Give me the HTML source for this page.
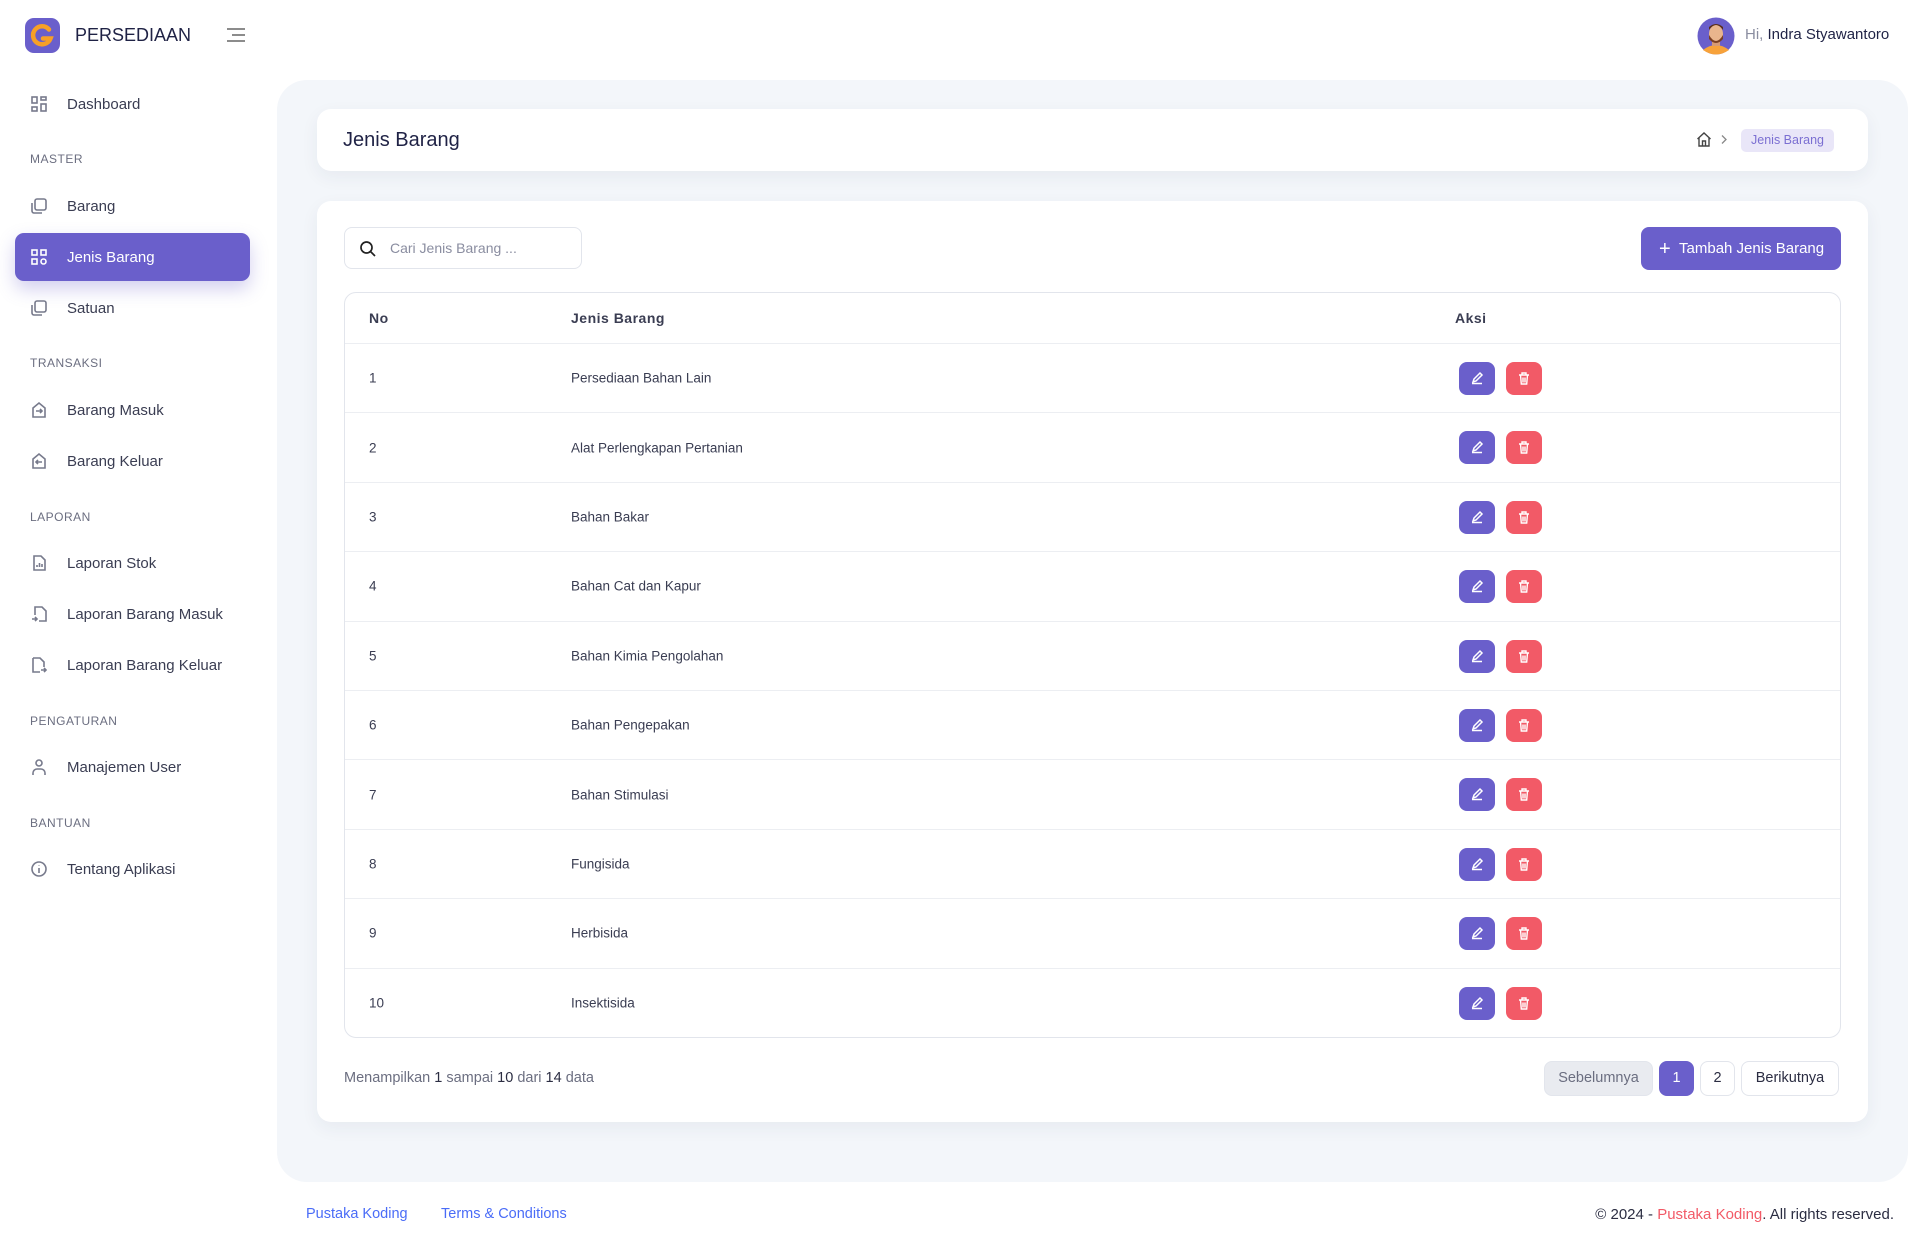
<!DOCTYPE html>
<html><head><meta charset="utf-8"><style>
*{box-sizing:border-box;margin:0;padding:0}
body{width:1920px;height:1250px;background:#fff;font-family:"Liberation Sans",sans-serif;color:#2b2d42;position:relative;overflow:hidden}
.a{position:absolute}
.logo{left:25px;top:18px;width:35px;height:35px;border-radius:9px;background:#6a5fcb}
.brand{left:75px;top:25px;font-size:18px;color:#1f2245}
.mi{position:absolute;left:15px;width:235px;height:48px;display:flex;align-items:center;font-size:15px;color:#3a3d52}
.mi svg{margin-left:15px;margin-right:19px;width:18px;height:18px;stroke:#777a8c;fill:none;stroke-width:1.6}
.mi.act{background:#6a5fcb;color:#fff;border-radius:9px;box-shadow:0 8px 18px rgba(106,95,203,.3)}
.mi.act svg{stroke:#fff}
.sec{position:absolute;left:30px;font-size:12px;color:#6b6e80;letter-spacing:.5px}
.main{left:277px;top:80px;width:1631px;height:1102px;background:#f3f6fa;border-radius:30px}
.card{background:#fff;border-radius:14px;box-shadow:0 6px 18px rgba(40,50,90,.06)}
.row{position:absolute;left:0;width:1496px;height:69.4px;border-top:1px solid #eceef2;font-size:13.5px;color:#3a3d52}
.row span{position:absolute;top:50%;transform:translateY(-50%)}
.be,.bd{position:absolute;top:18px;width:36px;height:33px;border-radius:8px}
.be{left:1114px;background:#6a5fcb}.bd{left:1161px;background:#f25a67}
.pg{position:absolute;top:1061px;height:35px;border:1px solid #e2e5ec;border-radius:8px;font-size:14.5px;text-align:center;line-height:33px;color:#2b2d42;background:#fff}
</style></head><body>
<div class="a logo"><svg width="35" height="35" viewBox="0 0 35 35"><path d="M24 11.5a9 9 0 1 0 1.5 9H18" fill="none" stroke="#f7a027" stroke-width="4.5" stroke-linecap="round"/></svg></div>
<div class="a brand">PERSEDIAAN</div>
<svg class="a" style="left:225px;top:27px" width="22" height="16"><path d="M2 2H20M7 8H20M2 14H20" stroke="#666" stroke-width="1.6"/></svg>

<div class="mi" style="top:80px"><svg viewBox="0 0 18 18"><rect x="2" y="2" width="5" height="6"/><rect x="11" y="2" width="5" height="3"/><rect x="2" y="12" width="5" height="4"/><rect x="11" y="9" width="5" height="7"/></svg>Dashboard</div>
<div class="sec" style="top:152px">MASTER</div>
<div class="mi" style="top:182px"><svg viewBox="0 0 18 18"><rect x="5" y="2" width="11" height="11" rx="2"/><path d="M2 6v8a2 2 0 0 0 2 2h8"/></svg>Barang</div>
<div class="mi act" style="top:233px"><svg viewBox="0 0 18 18"><rect x="2" y="2" width="5" height="5"/><rect x="11" y="2" width="5" height="5"/><rect x="2" y="11" width="5" height="5"/><circle cx="13.5" cy="13.5" r="2.5"/></svg>Jenis Barang</div>
<div class="mi" style="top:284px"><svg viewBox="0 0 18 18"><rect x="5" y="2" width="11" height="11" rx="2"/><path d="M2 6v8a2 2 0 0 0 2 2h8"/></svg>Satuan</div>
<div class="sec" style="top:356px">TRANSAKSI</div>
<div class="mi" style="top:386px"><svg viewBox="0 0 18 18"><path d="M3 7l6-5 6 5v9H3z M6 10h6M10 8l2 2-2 2"/></svg>Barang Masuk</div>
<div class="mi" style="top:437px"><svg viewBox="0 0 18 18"><path d="M3 7l6-5 6 5v9H3z M12 10H6M8 8l-2 2 2 2"/></svg>Barang Keluar</div>
<div class="sec" style="top:510px">LAPORAN</div>
<div class="mi" style="top:539px"><svg viewBox="0 0 18 18"><path d="M4 2h7l4 4v10H4z M7 13v-2M9.5 13v-4M12 13v-3"/></svg>Laporan Stok</div>
<div class="mi" style="top:590px"><svg viewBox="0 0 18 18"><path d="M5 10V2h7l4 4v10H9 M2 14h5M5 12l2 2-2 2"/></svg>Laporan Barang Masuk</div>
<div class="mi" style="top:641px"><svg viewBox="0 0 18 18"><path d="M3 2h7l4 4v5 M3 2v14h7 M11 14h5M14 12l2 2-2 2"/></svg>Laporan Barang Keluar</div>
<div class="sec" style="top:714px">PENGATURAN</div>
<div class="mi" style="top:743px"><svg viewBox="0 0 18 18"><circle cx="9" cy="5" r="3"/><path d="M3 17v-2a4 4 0 0 1 4-4h4a4 4 0 0 1 4 4v2"/></svg>Manajemen User</div>
<div class="sec" style="top:816px">BANTUAN</div>
<div class="mi" style="top:845px"><svg viewBox="0 0 18 18"><circle cx="9" cy="9" r="7"/><path d="M9 8v5M9 5.5v.5"/></svg>Tentang Aplikasi</div>

<svg class="a" style="left:1697px;top:15px" width="38" height="40" viewBox="0 0 38 40"><circle cx="19" cy="21" r="18.5" fill="#6a5fcb"/><path d="M6 35q13-10 26 0q-13 9-26 0z" fill="#f7a23a"/><rect x="15" y="26" width="8" height="5" fill="#d79b74"/><ellipse cx="19" cy="19" rx="7" ry="9" fill="#e9b58d"/><path d="M12 20q7 12 14 0v4q-7 8-14 0z" fill="#7a3f22"/><path d="M12 15q7-10 14 0v-3q-7-6-14 0z" fill="#5a2e18"/></svg>
<div class="a" style="left:1745px;top:26px;font-size:15px;color:#1f2245"><span style="color:#8a8da0">Hi,</span> Indra Styawantoro</div>

<div class="a main"></div>
<div class="a card" style="left:317px;top:109px;width:1551px;height:62px">
<div class="a" style="left:26px;top:20px;font-size:20px;color:#1f2245">Jenis Barang</div>
<svg class="a" style="left:1379px;top:22px" width="16" height="17" viewBox="0 0 16 17"><path d="M1.5 8L8 2l6.5 6M3 7v8h10V7M6.5 15v-5h3v5" fill="none" stroke="#444" stroke-width="1.4"/></svg>
<svg class="a" style="left:1403px;top:25px" width="8" height="11" viewBox="0 0 8 11"><path d="M2 1.5l4 4-4 4" fill="none" stroke="#888" stroke-width="1.3"/></svg>
<div class="a" style="left:1424px;top:20px;width:93px;height:23px;background:#e9e6f8;border-radius:5px;font-size:12.5px;color:#7b6fd2;text-align:center;line-height:23px">Jenis Barang</div>
</div>

<div class="a card" style="left:317px;top:201px;width:1551px;height:921px"></div>
<div class="a" style="left:344px;top:227px;width:238px;height:42px;border:1px solid #e2e5ec;border-radius:8px">
<svg class="a" style="left:14px;top:12px" width="18" height="18" viewBox="0 0 18 18"><circle cx="7.5" cy="7.5" r="5.5" fill="none" stroke="#222" stroke-width="1.7"/><path d="M11.5 11.5l4.5 4.5" stroke="#222" stroke-width="1.7"/></svg>
<div class="a" style="left:45px;top:12px;font-size:14px;color:#8a8da0">Cari Jenis Barang ...</div></div>
<div class="a" style="left:1641px;top:227px;width:200px;height:43px;background:#6a5fcb;border-radius:8px;color:#fff;font-size:15px;line-height:43px;padding-left:18px"><span style="font-size:20px;vertical-align:-2px">+</span>&nbsp;&nbsp;Tambah Jenis Barang</div>

<div class="a" style="left:344px;top:292px;width:1497px;height:746px;border:1px solid #e2e5ec;border-radius:12px;overflow:hidden">
<div class="a" style="left:24px;top:17px;font-size:14px;font-weight:bold;color:#3a3d52;letter-spacing:.5px">No</div>
<div class="a" style="left:226px;top:17px;font-size:14px;font-weight:bold;color:#3a3d52;letter-spacing:.5px">Jenis Barang</div>
<div class="a" style="left:1110px;top:17px;font-size:14px;font-weight:bold;color:#3a3d52;letter-spacing:.5px">Aksi</div>
<div id="rows"></div>
</div>
<script>
var n=["Persediaan Bahan Lain","Alat Perlengkapan Pertanian","Bahan Bakar","Bahan Cat dan Kapur","Bahan Kimia Pengolahan","Bahan Pengepakan","Bahan Stimulasi","Fungisida","Herbisida","Insektisida"],h="";
var ed='<svg style="position:absolute;left:11px;top:9px" width="14" height="14" viewBox="0 0 14 14"><path d="M3 11l1-3 6-6 2 2-6 6z M2 12.5h10" fill="none" stroke="#fff" stroke-width="1.5"/></svg>';
var tr='<svg style="position:absolute;left:11px;top:9px" width="14" height="15" viewBox="0 0 14 15"><path d="M2 4h10M5 4V2h4v2M3.5 4l.8 9h5.4l.8-9M6 6.5v5M8 6.5v5" fill="none" stroke="#fff" stroke-width="1.4"/></svg>';
for(var i=0;i<10;i++){h+='<div class="row" style="top:'+(50+i*69.4)+'px"><span style="left:24px">'+(i+1)+'</span><span style="left:226px">'+n[i]+'</span><div class="be">'+ed+'</div><div class="bd">'+tr+'</div></div>';}
document.getElementById("rows").innerHTML=h;
</script>
<div class="a" style="left:344px;top:1070px;font-size:14.5px;color:#6b6e80">Menampilkan <span style="color:#2b2d42">1</span> sampai <span style="color:#2b2d42">10</span> dari <span style="color:#2b2d42">14</span> data</div>
<div class="pg" style="left:1544px;width:109px;background:#e9ebf0;color:#6b6e80">Sebelumnya</div>
<div class="pg" style="left:1659px;width:35px;background:#6a5fcb;border-color:#6a5fcb;color:#fff">1</div>
<div class="pg" style="left:1700px;width:35px">2</div>
<div class="pg" style="left:1741px;width:98px">Berikutnya</div>

<div class="a" style="left:306px;top:1206px;font-size:14.5px;color:#4a6cf7">Pustaka Koding</div>
<div class="a" style="left:441px;top:1206px;font-size:14.5px;color:#4a6cf7">Terms &amp; Conditions</div>
<div class="a" style="right:26px;top:1206px;font-size:15px;color:#2b2d42">© 2024 - <span style="color:#f25a67">Pustaka Koding</span>. All rights reserved.</div>
</body></html>
